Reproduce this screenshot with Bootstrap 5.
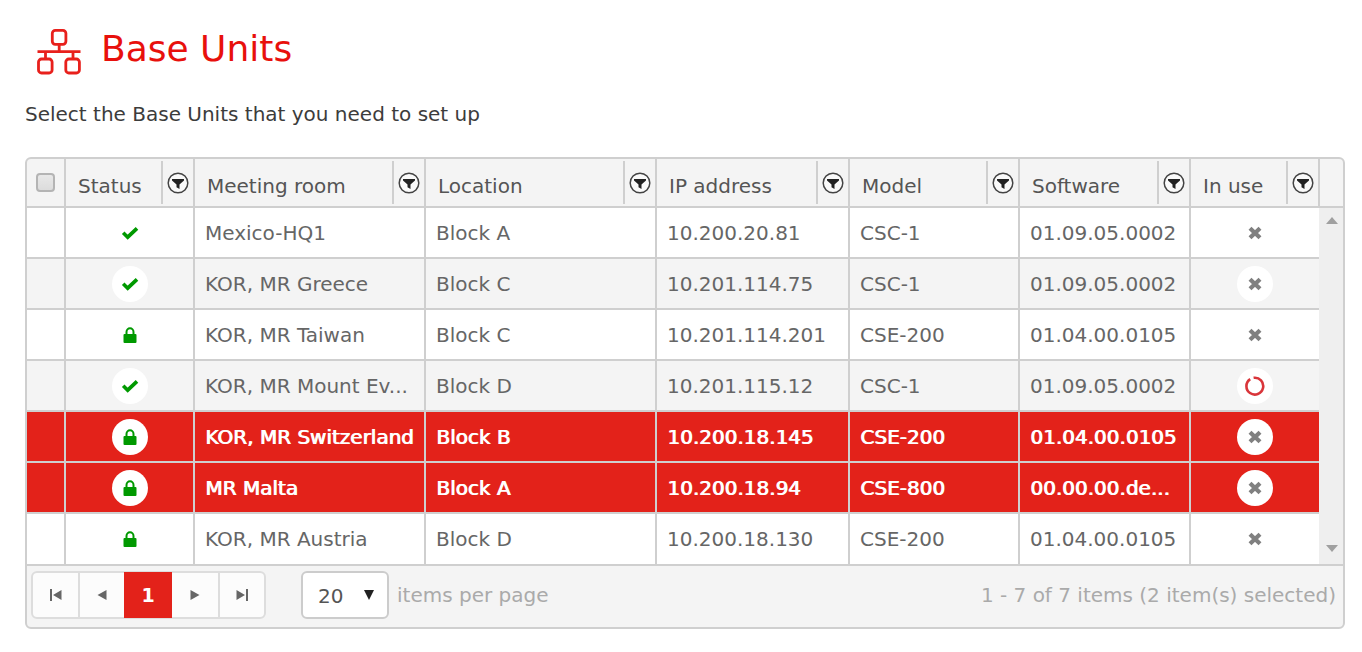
<!DOCTYPE html>
<html lang="en">
<head>
<meta charset="utf-8">
<meta name="viewport" content="width=device-width, initial-scale=1">
<title>Base Units</title>
<link href="https://cdn.jsdelivr.net/npm/bootstrap@5.3.0/dist/css/bootstrap.min.css" rel="stylesheet">
<style>
  :root { --brand: #e3221a; --line: #cfcfcf; --panel: #f4f4f4; }
  body { font-family: "DejaVu Sans", Verdana, sans-serif; font-size: 20px; line-height: 24px; color: #3c3c3c; background: #fff; }
  main { padding: 26px 17px 24px 25px; }
  .page-title { gap: 19px; padding-left: 11px; color: #e8100c; }
  .page-title h1 { font-size: 36px; line-height: 46px; }
  .intro { margin: 27px 0 31px; }
  .unit-grid { border: 2px solid var(--line); border-radius: 6px; background: var(--panel); overflow: hidden; }
  .unit-table { table-layout: fixed; --bs-table-bg: transparent; color: #666; }
  .unit-table > :not(caption) > * > * { border: 0 solid var(--line); padding: 0 0 0 10px; white-space: nowrap; overflow: hidden; box-shadow: none; color: inherit; vertical-align: middle; }
  .unit-table > * > tr > * + * { border-left-width: 2px !important; }
  .unit-table > thead > tr > th { height: 48px; font-weight: 400; border-bottom-width: 2px; padding: 0; color: #555; }
  .unit-table > tbody > tr > td { height: 51px; border-bottom-width: 2px; }
  .unit-table > tbody > tr:last-child > td, .unit-table > tbody > tr > td.scroll-track { border-bottom-width: 0; }
  .unit-table > tbody > tr { background: #fff; }
  .unit-table > tbody > tr:nth-child(even) { background: var(--panel); }
  .unit-table > tbody > tr.picked { background: var(--brand); color: #fff; text-shadow: 1px 0 currentColor; }
  .unit-table > tbody > tr > td.mark-cell { padding: 0; }
  .unit-table > tbody > tr > td.scroll-track { background: #efefef; border-left-width: 0 !important; padding: 0; vertical-align: top; }
  .scroll-arrows { height: 355px; padding: 9px 0 11px; }
  .th-label { padding: 7px 0 0 12px; }
  .filter-btn { width: 32px; height: 43px; border: 0; border-left: 2px solid var(--line); background: none; padding: 0 0 0 4px; }
  .round { width: 36px; height: 36px; border-radius: 50%; background: #fff; }
  .all-box { appearance: none; width: 19px; height: 19px; border: 2px solid #b4b4b4; border-radius: 4px; background: linear-gradient(#e8e8e8, #dcdcdc); }
  .pager-bar { border-top: 2px solid var(--line); height: 63px; padding: 0 7px 4px 4px; color: #aaa; }
  .pager { border: 2px solid #ddd; border-radius: 6px; background: #fcfcfc; }
  .pager button { width: 46px; height: 44px; border: 0; border-left: 2px solid #ddd; background: none; padding: 0; color: #666; }
  .pager button:first-child { border-left: 0; width: 45px; }
  .pager .current { background: var(--brand); color: #fff; font-size: 19px; font-weight: 700; height: 46px; margin: -1px 0; border: 0; width: 48px; }
  .pager .current + button { border-left: 0; }
  .size-box { margin-left: 35px; }
  .size-box select { appearance: none; width: 88px; height: 48px; border: 2px solid #ccc; border-radius: 6px; background: #fff; padding: 3px 0 0 15px; color: #555; }
  .size-box svg { position: absolute; right: 14px; top: 19px; pointer-events: none; }
</style>
</head>
<body>
<svg class="d-none">
  <symbol id="funnel" viewBox="0 0 22 22"><circle cx="11" cy="11" r="9.800" fill="#fafafa" stroke="#444" stroke-width="1.500"/><path d="M5 7h12v1.500l-4.500 4v4.500l-3-1.800v-2.700L5 8.500z" fill="#222"/></symbol>
  <symbol id="tick" viewBox="0 0 18 14"><path d="M2.200 6.800l4.500 4.400L16 2.400" fill="none" stroke="#090" stroke-width="3.700"/></symbol>
  <symbol id="lock" viewBox="0 0 14 16"><path d="M3.500 8V5a3.500 3.800 0 0 1 7 0v3" fill="none" stroke="#090" stroke-width="2"/><rect x=".5" y="7" width="13" height="9" rx="1" fill="#090"/></symbol>
  <symbol id="cross" viewBox="0 0 14 14"><path d="M2 2.200l10 9.600M12 2.200L2 11.800" stroke="#808080" stroke-width="4.200"/></symbol>
  <symbol id="busy" viewBox="0 0 20 20"><path d="M8.600 1.800A8.400 8.400 0 1 1 5.200 3.100" fill="none" stroke="#d9353a" stroke-width="2.600"/></symbol>
</svg>
<main>
  <div class="page-title d-flex align-items-start">
    <svg width="46" height="49" viewBox="0 0 46 49" fill="none" stroke="#e8201c" stroke-width="2.800" aria-hidden="true">
      <rect x="16.300" y="4.300" width="13.600" height="14" rx="3"/><rect x="2.500" y="33" width="13.600" height="14" rx="3"/><rect x="29.800" y="33" width="13.600" height="14" rx="3"/>
      <path d="M23.200 18v8M1.500 25.600h43M9.500 26v7M37 26v7"/>
    </svg>
    <h1 class="fw-normal mb-0">Base Units</h1>
  </div>
  <p class="intro">Select the Base Units that you need to set up</p>

  <div class="unit-grid">
    <table class="table unit-table mb-0">
      <colgroup><col style="width:38px"><col style="width:129px"><col style="width:231px"><col style="width:231px"><col style="width:193px"><col style="width:170px"><col style="width:171px"><col style="width:129px"><col style="width:25px"></colgroup>
      <thead>
        <tr>
          <th class="text-center"><input type="checkbox" class="all-box d-block mx-auto" aria-label="Select all"></th>
          <th><div class="d-flex align-items-center justify-content-between"><span class="th-label">Status</span><button class="filter-btn" aria-label="Filter status"><svg class="d-block" width="22" height="22"><use href="#funnel"/></svg></button></div></th>
          <th><div class="d-flex align-items-center justify-content-between"><span class="th-label">Meeting room</span><button class="filter-btn" aria-label="Filter meeting room"><svg class="d-block" width="22" height="22"><use href="#funnel"/></svg></button></div></th>
          <th><div class="d-flex align-items-center justify-content-between"><span class="th-label">Location</span><button class="filter-btn" aria-label="Filter location"><svg class="d-block" width="22" height="22"><use href="#funnel"/></svg></button></div></th>
          <th><div class="d-flex align-items-center justify-content-between"><span class="th-label">IP address</span><button class="filter-btn" aria-label="Filter IP address"><svg class="d-block" width="22" height="22"><use href="#funnel"/></svg></button></div></th>
          <th><div class="d-flex align-items-center justify-content-between"><span class="th-label">Model</span><button class="filter-btn" aria-label="Filter model"><svg class="d-block" width="22" height="22"><use href="#funnel"/></svg></button></div></th>
          <th><div class="d-flex align-items-center justify-content-between"><span class="th-label">Software</span><button class="filter-btn" aria-label="Filter software"><svg class="d-block" width="22" height="22"><use href="#funnel"/></svg></button></div></th>
          <th><div class="d-flex align-items-center justify-content-between"><span class="th-label">In use</span><button class="filter-btn" aria-label="Filter in use"><svg class="d-block" width="22" height="22"><use href="#funnel"/></svg></button></div></th>
          <th></th>
        </tr>
      </thead>
      <tbody>
        <tr><td></td><td class="mark-cell"><div class="round d-flex align-items-center justify-content-center mx-auto"><svg width="18" height="14"><use href="#tick"/></svg></div></td><td>Mexico-HQ1</td><td>Block A</td><td>10.200.20.81</td><td>CSC-1</td><td>01.09.05.0002</td><td class="mark-cell"><div class="round d-flex align-items-center justify-content-center mx-auto"><svg width="14" height="14"><use href="#cross"/></svg></div></td>
          <td class="scroll-track" rowspan="7"><div class="scroll-arrows d-flex flex-column justify-content-between align-items-center"><svg width="12" height="7"><path d="M0 7l6-7 6 7z" fill="#a0a0a0"/></svg><svg width="12" height="7"><path d="M0 0l6 7 6-7z" fill="#a0a0a0"/></svg></div></td></tr>
        <tr><td></td><td class="mark-cell"><div class="round d-flex align-items-center justify-content-center mx-auto"><svg width="18" height="14"><use href="#tick"/></svg></div></td><td>KOR, MR Greece</td><td>Block C</td><td>10.201.114.75</td><td>CSC-1</td><td>01.09.05.0002</td><td class="mark-cell"><div class="round d-flex align-items-center justify-content-center mx-auto"><svg width="14" height="14"><use href="#cross"/></svg></div></td></tr>
        <tr><td></td><td class="mark-cell"><div class="round d-flex align-items-center justify-content-center mx-auto"><svg width="14" height="16"><use href="#lock"/></svg></div></td><td>KOR, MR Taiwan</td><td>Block C</td><td>10.201.114.201</td><td>CSE-200</td><td>01.04.00.0105</td><td class="mark-cell"><div class="round d-flex align-items-center justify-content-center mx-auto"><svg width="14" height="14"><use href="#cross"/></svg></div></td></tr>
        <tr><td></td><td class="mark-cell"><div class="round d-flex align-items-center justify-content-center mx-auto"><svg width="18" height="14"><use href="#tick"/></svg></div></td><td>KOR, MR Mount Ev...</td><td>Block D</td><td>10.201.115.12</td><td>CSC-1</td><td>01.09.05.0002</td><td class="mark-cell"><div class="round d-flex align-items-center justify-content-center mx-auto"><svg width="20" height="20"><use href="#busy"/></svg></div></td></tr>
        <tr class="picked"><td></td><td class="mark-cell"><div class="round d-flex align-items-center justify-content-center mx-auto"><svg width="14" height="16"><use href="#lock"/></svg></div></td><td>KOR, MR Switzerland</td><td>Block B</td><td>10.200.18.145</td><td>CSE-200</td><td>01.04.00.0105</td><td class="mark-cell"><div class="round d-flex align-items-center justify-content-center mx-auto"><svg width="14" height="14"><use href="#cross"/></svg></div></td></tr>
        <tr class="picked"><td></td><td class="mark-cell"><div class="round d-flex align-items-center justify-content-center mx-auto"><svg width="14" height="16"><use href="#lock"/></svg></div></td><td>MR Malta</td><td>Block A</td><td>10.200.18.94</td><td>CSE-800</td><td>00.00.00.de...</td><td class="mark-cell"><div class="round d-flex align-items-center justify-content-center mx-auto"><svg width="14" height="14"><use href="#cross"/></svg></div></td></tr>
        <tr><td></td><td class="mark-cell"><div class="round d-flex align-items-center justify-content-center mx-auto"><svg width="14" height="16"><use href="#lock"/></svg></div></td><td>KOR, MR Austria</td><td>Block D</td><td>10.200.18.130</td><td>CSE-200</td><td>01.04.00.0105</td><td class="mark-cell"><div class="round d-flex align-items-center justify-content-center mx-auto"><svg width="14" height="14"><use href="#cross"/></svg></div></td></tr>
      </tbody>
    </table>
    <div class="pager-bar d-flex align-items-center">
      <nav class="pager d-flex" aria-label="Pages">
        <button aria-label="First page"><svg class="d-block mx-auto" width="12" height="12" fill="#666"><path d="M0 0h2v12H0zM11.500 1v10L3 6z"/></svg></button>
        <button aria-label="Previous page"><svg class="d-block mx-auto" width="12" height="12" fill="#666"><path d="M10.500 1v10L1.500 6z"/></svg></button>
        <button class="current" aria-current="page">1</button>
        <button aria-label="Next page"><svg class="d-block mx-auto" width="12" height="12" fill="#666"><path d="M1.500 1v10l9-5z"/></svg></button>
        <button aria-label="Last page"><svg class="d-block mx-auto" width="12" height="12" fill="#666"><path d="M10 0h2v12h-2zM.500 1v10L9 6z"/></svg></button>
      </nav>
      <div class="size-box position-relative"><select id="page-size"><option>20</option></select><svg width="12" height="10"><path d="M1 0h10L6 10z" fill="#222"/></svg></div>
      <label class="ms-2" for="page-size">items per page</label>
      <span class="ms-auto">1 - 7 of 7 items (2 item(s) selected)</span>
    </div>
  </div>
</main>
<script src="https://cdn.jsdelivr.net/npm/bootstrap@5.3.0/dist/js/bootstrap.bundle.min.js"></script>
</body>
</html>
